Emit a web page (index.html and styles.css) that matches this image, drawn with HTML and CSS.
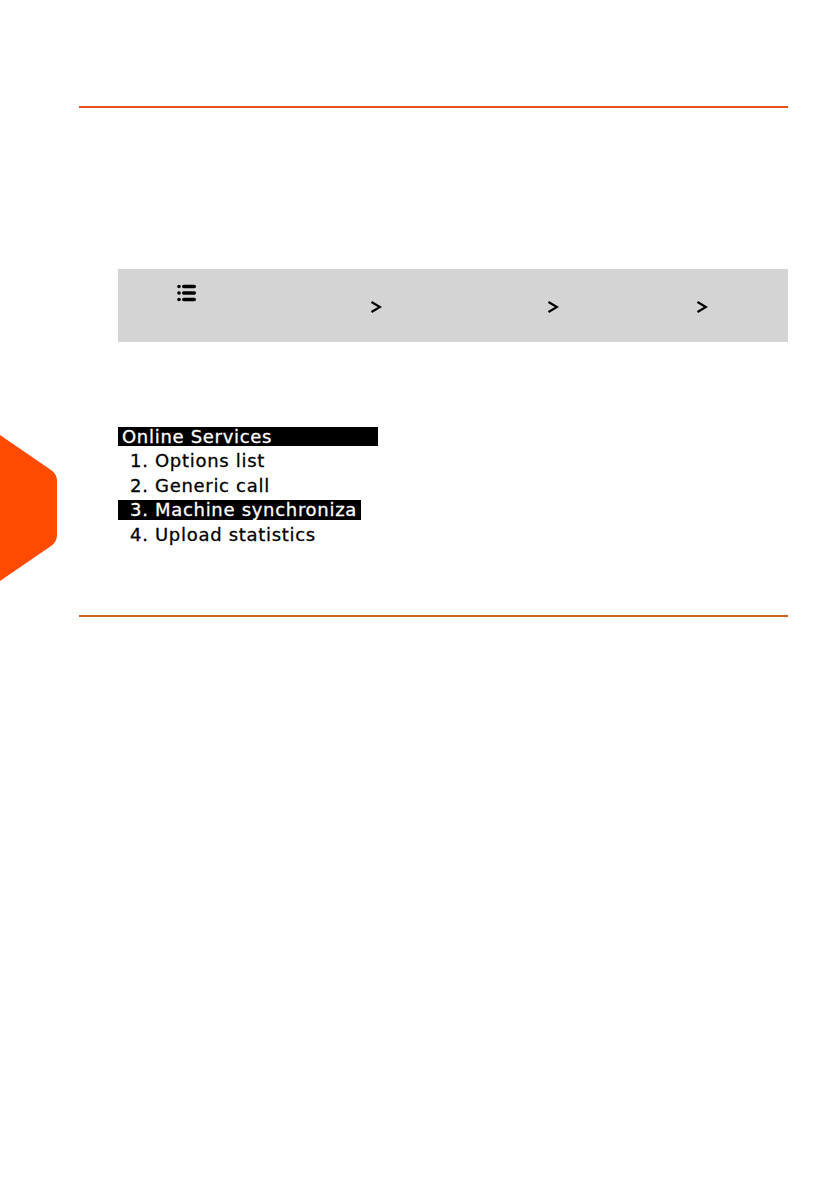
FILE: index.html
```html
<!DOCTYPE html>
<html>
<head>
<meta charset="utf-8">
<link rel="stylesheet" href="styles.css">
</head>
<body>
<div class="page">
  <div class="rule rule-top"></div>
  <div class="path-box">
    <div class="path-icon">
      <svg width="19" height="18" viewBox="0 0 19 18">
        <circle cx="2" cy="2.5" r="1.8" fill="#000"/>
        <rect x="5" y="0.8" width="14" height="3.4" rx="1.7" fill="#000"/>
        <circle cx="2" cy="9" r="1.8" fill="#000"/>
        <rect x="5" y="7.3" width="14" height="3.4" rx="1.7" fill="#000"/>
        <circle cx="2" cy="15.5" r="1.8" fill="#000"/>
        <rect x="5" y="13.8" width="14" height="3.4" rx="1.7" fill="#000"/>
      </svg>
    </div>
    <span class="chev c1"><svg width="12" height="14" viewBox="0 0 12 14"><polyline points="1.5,2 10,7 1.5,12" fill="none" stroke="#000" stroke-width="2.2"/></svg></span>
    <span class="chev c2"><svg width="12" height="14" viewBox="0 0 12 14"><polyline points="1.5,2 10,7 1.5,12" fill="none" stroke="#000" stroke-width="2.2"/></svg></span>
    <span class="chev c3"><svg width="12" height="14" viewBox="0 0 12 14"><polyline points="1.5,2 10,7 1.5,12" fill="none" stroke="#000" stroke-width="2.2"/></svg></span>
  </div>
  <div class="screen">
    <div class="screen-title">Online Services</div>
    <div class="screen-item">1. Options list</div>
    <div class="screen-item">2. Generic call</div>
    <div class="screen-item selected">3. Machine synchroniza</div>
    <div class="screen-item">4. Upload statistics</div>
  </div>
  <div class="rule rule-bottom"></div>
</div>
<div class="tab">
  <svg width="58" height="146" viewBox="0 0 58 146">
    <path d="M0 0 L51 35 Q57 39 57 46 L57 100 Q57 107 51 111 L0 146 Z" fill="#ff4a00"/>
  </svg>
</div>
</body>
</html>
```
FILE: styles.css
```css
html, body {
  margin: 0;
  padding: 0;
  background: #fff;
}
.page {
  padding-top: 106px;
  font-family: "DejaVu Sans", sans-serif;
}
.rule {
  margin-left: 79px;
  width: 709px;
  height: 2px;
}
.rule-top {
  background: #e6521f;
}
.rule-bottom {
  background: #c9612c;
  margin-top: 70px;
}
.path-box {
  margin-top: 161px;
  margin-left: 118px;
  width: 670px;
  height: 73px;
  background: #d4d4d4;
  position: relative;
}
.path-icon {
  position: absolute;
  left: 59px;
  top: 15px;
  line-height: 0;
}
.chev {
  position: absolute;
  top: 31px;
  line-height: 0;
}
.c1 { left: 252px; }
.c2 { left: 429px; }
.c3 { left: 578px; }
.screen {
  margin-top: 85px;
  margin-left: 118px;
  font-size: 18px;
  letter-spacing: 0.7px;
  color: #000;
  -webkit-text-stroke: 0.3px currentColor;
}
.screen-title {
  width: 260px;
  height: 19px;
  line-height: 20px;
  background: #000;
  color: #fff;
  padding-left: 4px;
  box-sizing: border-box;
  margin-bottom: 5px;
  overflow: hidden;
}
.screen-item {
  height: 20px;
  line-height: 20px;
  padding-left: 12px;
  margin-bottom: 4.5px;
  white-space: nowrap;
}
.screen-item.selected {
  width: 243px;
  box-sizing: border-box;
  background: #000;
  color: #fff;
  overflow: hidden;
}
.tab {
  position: absolute;
  left: 0;
  top: 435px;
  line-height: 0;
}
```
